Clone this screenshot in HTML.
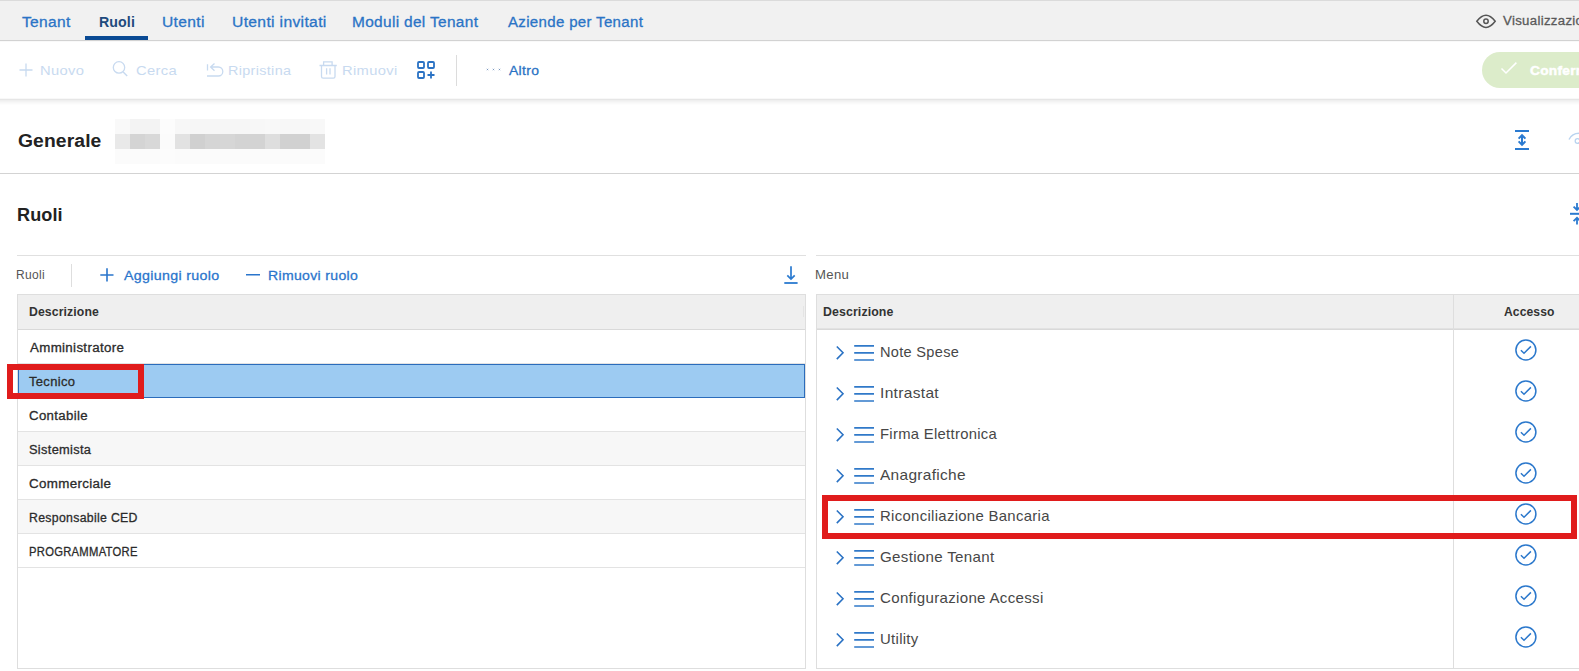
<!DOCTYPE html>
<html><head><meta charset="utf-8">
<style>
*{margin:0;padding:0;box-sizing:border-box}
html,body{width:1579px;height:671px;overflow:hidden;background:#fff;font-family:"Liberation Sans",sans-serif}
.a{position:absolute;white-space:nowrap}
.red{position:absolute;border:6px solid #e01c1c}
</style></head><body>
<div class="a" style="left:0;top:0;width:1579px;height:41px;background:#f1f1f1;border-top:1px solid #dbdbdb;border-bottom:1px solid #d2d2d2"></div>
<div id="t_tenant" class="a" style="left:22px;top:14px;font-size:14px;line-height:16px;color:#2a74c6;-webkit-text-stroke:0.28px #2a74c6;letter-spacing:0.300px;transform-origin:0 0;transform:scaleX(1.1093);margin-left:0.48px;">Tenant</div>
<div id="t_ruoli" class="a" style="left:99px;top:14px;font-size:14px;line-height:16px;color:#1d4a7d;font-weight:bold;letter-spacing:0.100px;transform-origin:0 0;transform:scaleX(1.0118);margin-left:-0.16px;">Ruoli</div>
<div id="t_utenti" class="a" style="left:162px;top:14px;font-size:14px;line-height:16px;color:#2a74c6;-webkit-text-stroke:0.28px #2a74c6;letter-spacing:0.300px;transform-origin:0 0;transform:scaleX(1.1138);margin-left:-0.48px;">Utenti</div>
<div id="t_inv" class="a" style="left:232px;top:14px;font-size:14px;line-height:16px;color:#2a74c6;-webkit-text-stroke:0.28px #2a74c6;letter-spacing:0.300px;transform-origin:0 0;transform:scaleX(1.1181);margin-left:-0.48px;">Utenti invitati</div>
<div id="t_mod" class="a" style="left:353px;top:14px;font-size:14px;line-height:16px;color:#2a74c6;-webkit-text-stroke:0.28px #2a74c6;letter-spacing:0.300px;transform-origin:0 0;transform:scaleX(1.1018);margin-left:-0.96px;">Moduli del Tenant</div>
<div id="t_az" class="a" style="left:507px;top:14px;font-size:14px;line-height:16px;color:#2a74c6;-webkit-text-stroke:0.28px #2a74c6;letter-spacing:0.300px;transform-origin:0 0;transform:scaleX(1.0746);margin-left:0.64px;">Aziende per Tenant</div>
<div class="a" style="left:85px;top:36px;width:63px;height:4px;background:#0a4a94"></div>
<div id="visual" class="a" style="left:1503px;top:14px;font-size:12.5px;line-height:15px;color:#595959;-webkit-text-stroke:0.28px #595959;letter-spacing:0.300px;transform-origin:0 0;transform:scaleX(1.0570);margin-left:0.00px;">Visualizzazione</div>
<div class="a" style="left:0;top:41px;width:1579px;height:1px;background:#f9f9f9"></div>
<div class="a" style="left:0;top:98px;width:1579px;height:1px;background:#f8f8f8"></div>
<div class="a" style="left:0;top:99px;width:1579px;height:1px;background:#e6e6e6"></div>
<div class="a" style="left:0;top:100px;width:1579px;height:1px;background:#efefef"></div>
<div class="a" style="left:0;top:101px;width:1579px;height:1px;background:#f3f3f3"></div>
<div class="a" style="left:0;top:102px;width:1579px;height:1px;background:#f7f7f7"></div>
<div class="a" style="left:0;top:103px;width:1579px;height:1px;background:#fafafa"></div>
<div class="a" style="left:0;top:104px;width:1579px;height:1px;background:#fdfdfd"></div>
<div id="nuovo" class="a" style="left:42px;top:63px;font-size:13px;line-height:16px;color:#c8daf0;letter-spacing:0.300px;transform-origin:0 0;transform:scaleX(1.1336);margin-left:-1.76px;">Nuovo</div>
<div id="cerca" class="a" style="left:137px;top:63px;font-size:13px;line-height:16px;color:#c8daf0;letter-spacing:0.300px;transform-origin:0 0;transform:scaleX(1.1353);margin-left:-0.96px;">Cerca</div>
<div id="ripr" class="a" style="left:230px;top:63px;font-size:13px;line-height:16px;color:#c8daf0;letter-spacing:0.300px;transform-origin:0 0;transform:scaleX(1.1076);margin-left:-1.76px;">Ripristina</div>
<div id="rimuovi" class="a" style="left:344px;top:63px;font-size:13px;line-height:16px;color:#c8daf0;letter-spacing:0.300px;transform-origin:0 0;transform:scaleX(1.1316);margin-left:-1.76px;">Rimuovi</div>
<div class="a" style="left:456px;top:55px;width:1px;height:31px;background:#dcdcdc"></div>
<div id="altro" class="a" style="left:509px;top:63px;font-size:13px;line-height:16px;color:#2a72c4;-webkit-text-stroke:0.28px #2a72c4;letter-spacing:0.300px;transform-origin:0 0;transform:scaleX(1.0714);margin-left:0.00px;">Altro</div>
<div class="a" style="left:1482px;top:52px;width:120px;height:36px;border-radius:18px;background:#dcecca"></div>
<div id="conf" class="a" style="left:1530px;top:63px;font-size:13px;line-height:16px;color:#fff;font-weight:bold;letter-spacing:0.300px;transform-origin:0 0;transform:scaleX(1.0500);margin-left:0.00px;-webkit-text-stroke:0.5px #fff;">Conferma</div>
<div id="generale" class="a" style="left:17px;top:131px;font-size:18px;line-height:20px;color:#222;font-weight:bold;letter-spacing:0.100px;transform-origin:0 0;transform:scaleX(1.0719);margin-left:0.64px;">Generale</div>
<div class="a" style="left:115px;top:119px;width:210px;height:45px;display:grid;grid-template-columns:repeat(14,15px);grid-template-rows:repeat(3,15px)"><i style="background:#f9f9f9"></i><i style="background:#f3f3f3"></i><i style="background:#f3f3f3"></i><i style="background:#fcfcfc"></i><i style="background:#f7f7f7"></i><i style="background:#f6f6f6"></i><i style="background:#f6f6f6"></i><i style="background:#f6f6f6"></i><i style="background:#f6f6f6"></i><i style="background:#f7f7f7"></i><i style="background:#f8f8f8"></i><i style="background:#f7f7f7"></i><i style="background:#f7f7f7"></i><i style="background:#f8f8f8"></i><i style="background:#e9e9e9"></i><i style="background:#d4d4d4"></i><i style="background:#d8d8d8"></i><i style="background:#fbfbfb"></i><i style="background:#e2e2e2"></i><i style="background:#d0d0d0"></i><i style="background:#d5d5d5"></i><i style="background:#d6d6d6"></i><i style="background:#d3d3d3"></i><i style="background:#d3d3d3"></i><i style="background:#dedede"></i><i style="background:#d1d1d1"></i><i style="background:#d1d1d1"></i><i style="background:#e3e3e3"></i><i style="background:#fbfbfb"></i><i style="background:#fbfbfb"></i><i style="background:#fbfbfb"></i><i style="background:#fcfcfc"></i><i style="background:#fbfbfb"></i><i style="background:#fbfbfb"></i><i style="background:#fbfbfb"></i><i style="background:#fbfbfb"></i><i style="background:#fbfbfb"></i><i style="background:#fbfbfb"></i><i style="background:#fbfbfb"></i><i style="background:#fbfbfb"></i><i style="background:#fbfbfb"></i><i style="background:#fbfbfb"></i></div>
<div class="a" style="left:0;top:173px;width:1579px;height:1px;background:#d3d3d3"></div>
<div id="ruolititle" class="a" style="left:17px;top:205px;font-size:18px;line-height:20px;color:#222;font-weight:bold;letter-spacing:0.100px;transform-origin:0 0;transform:scaleX(1.0048);margin-left:-0.48px;">Ruoli</div>
<div class="a" style="left:17px;top:255px;width:789px;height:1px;background:#e0e0e0"></div>
<div class="a" style="left:816px;top:255px;width:763px;height:1px;background:#e0e0e0"></div>
<div id="ruolismall" class="a" style="left:17px;top:268px;font-size:12px;line-height:14px;color:#555;letter-spacing:0.300px;transform-origin:0 0;transform:scaleX(1.0007);margin-left:-0.80px;">Ruoli</div>
<div class="a" style="left:71px;top:264px;width:1px;height:23px;background:#dedede"></div>
<div id="aggiungi" class="a" style="left:123px;top:268px;font-size:13.5px;line-height:16px;color:#2a75cc;-webkit-text-stroke:0.28px #2a75cc;letter-spacing:0.300px;transform-origin:0 0;transform:scaleX(1.0556);margin-left:0.96px;">Aggiungi ruolo</div>
<div id="rimruolo" class="a" style="left:269px;top:268px;font-size:13.5px;line-height:16px;color:#2a75cc;-webkit-text-stroke:0.28px #2a75cc;letter-spacing:0.300px;transform-origin:0 0;transform:scaleX(1.0424);margin-left:-0.64px;">Rimuovi ruolo</div>
<div id="menu" class="a" style="left:816px;top:268px;font-size:12px;line-height:14px;color:#555;letter-spacing:0.300px;transform-origin:0 0;transform:scaleX(1.0936);margin-left:-0.80px;">Menu</div>
<div class="a" style="left:17px;top:294px;width:789px;height:375px;border:1px solid #dedede"></div>
<div class="a" style="left:18px;top:295px;width:787px;height:35px;background:#efefef;border-bottom:1px solid #d9d9d9"></div>
<div class="a" style="left:803px;top:306px;width:1px;height:11px;background:#e4e4e4"></div>
<div id="descL" class="a" style="left:29px;top:305px;font-size:12px;line-height:14px;color:#333;font-weight:bold;letter-spacing:0.100px;transform-origin:0 0;transform:scaleX(1.0207);margin-left:0.48px;">Descrizione</div>
<div class="a" style="left:18px;top:330px;width:787px;height:34px;background:#fff;border-bottom:1px solid #e3e3e3"></div>
<div id="row0" class="a" style="left:29px;top:340.5px;font-size:12px;line-height:14px;color:#2b2b2b;-webkit-text-stroke:0.28px #2b2b2b;letter-spacing:0.300px;transform-origin:0 0;transform:scaleX(1.1094);margin-left:1.28px;">Amministratore</div>
<div class="a" style="left:18px;top:364px;width:787px;height:34px;background:#9dcbf2;border:1px solid #2b6cbb"></div>
<div id="row1" class="a" style="left:29px;top:374.5px;font-size:12px;line-height:14px;color:#2b2b2b;-webkit-text-stroke:0.28px #2b2b2b;letter-spacing:0.300px;transform-origin:0 0;transform:scaleX(1.0813);margin-left:0.32px;">Tecnico</div>
<div class="a" style="left:18px;top:398px;width:787px;height:34px;background:#fff;border-bottom:1px solid #e3e3e3"></div>
<div id="row2" class="a" style="left:29px;top:408.5px;font-size:12px;line-height:14px;color:#2b2b2b;-webkit-text-stroke:0.28px #2b2b2b;letter-spacing:0.300px;transform-origin:0 0;transform:scaleX(1.1020);margin-left:0.48px;">Contabile</div>
<div class="a" style="left:18px;top:432px;width:787px;height:34px;background:#f7f7f7;border-bottom:1px solid #e3e3e3"></div>
<div id="row3" class="a" style="left:29px;top:442.5px;font-size:12px;line-height:14px;color:#2b2b2b;-webkit-text-stroke:0.28px #2b2b2b;letter-spacing:0.300px;transform-origin:0 0;transform:scaleX(1.0678);margin-left:0.48px;">Sistemista</div>
<div class="a" style="left:18px;top:466px;width:787px;height:34px;background:#fff;border-bottom:1px solid #e3e3e3"></div>
<div id="row4" class="a" style="left:29px;top:476.5px;font-size:12px;line-height:14px;color:#2b2b2b;-webkit-text-stroke:0.28px #2b2b2b;letter-spacing:0.300px;transform-origin:0 0;transform:scaleX(1.1136);margin-left:0.48px;">Commerciale</div>
<div class="a" style="left:18px;top:500px;width:787px;height:34px;background:#f7f7f7;border-bottom:1px solid #e3e3e3"></div>
<div id="row5" class="a" style="left:29px;top:510.5px;font-size:12px;line-height:14px;color:#2b2b2b;-webkit-text-stroke:0.28px #2b2b2b;letter-spacing:0.300px;transform-origin:0 0;transform:scaleX(1.0246);margin-left:0.48px;">Responsabile CED</div>
<div class="a" style="left:18px;top:534px;width:787px;height:34px;background:#fff;border-bottom:1px solid #e3e3e3"></div>
<div id="row6" class="a" style="left:29px;top:544.5px;font-size:12px;line-height:14px;color:#2b2b2b;-webkit-text-stroke:0.28px #2b2b2b;letter-spacing:0.300px;transform-origin:0 0;transform:scaleX(0.9362);margin-left:0.48px;">PROGRAMMATORE</div>
<div class="a" style="left:816px;top:294px;width:770px;height:375px;border:1px solid #dedede"></div>
<div class="a" style="left:817px;top:295px;width:770px;height:35px;background:#efefef;border-bottom:1px solid #d9d9d9"></div>
<div class="a" style="left:817px;top:328px;width:762px;height:1px;background:#e2e2e2"></div>
<div class="a" style="left:1453px;top:295px;width:1px;height:373px;background:#dedede"></div>
<div id="descR" class="a" style="left:824px;top:305px;font-size:12px;line-height:14px;color:#333;font-weight:bold;letter-spacing:0.100px;transform-origin:0 0;transform:scaleX(1.0294);margin-left:-0.80px;">Descrizione</div>
<div id="accesso" class="a" style="left:1504px;top:305px;font-size:12px;line-height:14px;color:#333;font-weight:bold;letter-spacing:0.100px;transform-origin:0 0;transform:scaleX(1.0080);margin-left:-0.48px;">Accesso</div>
<div id="m0" class="a" style="left:881px;top:344px;font-size:14.5px;line-height:17px;color:#474747;letter-spacing:0.300px;transform-origin:0 0;transform:scaleX(1.0053);margin-left:-1.12px;">Note Spese</div>
<div id="m1" class="a" style="left:881px;top:385px;font-size:14.5px;line-height:17px;color:#474747;letter-spacing:0.300px;transform-origin:0 0;transform:scaleX(1.0705);margin-left:-1.44px;">Intrastat</div>
<div id="m2" class="a" style="left:881px;top:426px;font-size:14.5px;line-height:17px;color:#474747;letter-spacing:0.300px;transform-origin:0 0;transform:scaleX(1.0211);margin-left:-1.44px;">Firma Elettronica</div>
<div id="m3" class="a" style="left:881px;top:467px;font-size:14.5px;line-height:17px;color:#474747;letter-spacing:0.300px;transform-origin:0 0;transform:scaleX(1.0650);margin-left:-0.64px;">Anagrafiche</div>
<div id="m4" class="a" style="left:881px;top:508px;font-size:14.5px;line-height:17px;color:#474747;letter-spacing:0.300px;transform-origin:0 0;transform:scaleX(1.0281);margin-left:-1.44px;">Riconciliazione Bancaria</div>
<div id="m5" class="a" style="left:881px;top:549px;font-size:14.5px;line-height:17px;color:#474747;letter-spacing:0.300px;transform-origin:0 0;transform:scaleX(1.0418);margin-left:-0.64px;">Gestione Tenant</div>
<div id="m6" class="a" style="left:881px;top:590px;font-size:14.5px;line-height:17px;color:#474747;letter-spacing:0.300px;transform-origin:0 0;transform:scaleX(1.0398);margin-left:-0.64px;">Configurazione Accessi</div>
<div id="m7" class="a" style="left:881px;top:631px;font-size:14.5px;line-height:17px;color:#474747;letter-spacing:0.300px;transform-origin:0 0;transform:scaleX(1.0274);margin-left:-1.44px;">Utility</div>
<svg class="a" style="left:0;top:0" width="1579" height="671" viewBox="0 0 1579 671"><path d="M1476.8 21.3C1480 17.2 1483 15.3 1486 15.3C1489 15.3 1492 17.2 1495.2 21.3C1492 25.5 1489 27.4 1486 27.4C1483 27.4 1480 25.5 1476.8 21.3Z" fill="none" stroke="#555" stroke-width="1.5"/><circle cx="1486" cy="21.3" r="2.2" fill="none" stroke="#555" stroke-width="1.5"/><path d="M26 63.5V76.5M19.5 70H32.5" stroke="#c8daf0" stroke-width="1.3" fill="none"/><circle cx="119" cy="67.4" r="5.7" stroke="#c8daf0" stroke-width="1.3" fill="none"/><path d="M123.2 71.9L127.2 76" stroke="#c8daf0" stroke-width="1.4"/><path d="M207.5 64.3V70.5M214.5 63.5L210.6 67L214.5 70.7M210.6 67H218.3A4.5 4.5 0 0 1 218.3 76H207" stroke="#c8daf0" stroke-width="1.3" fill="none"/><path d="M319.5 65.5H336.8M323.6 65.5V61.9H332.1V65.5M321.5 66.3V76.6Q321.5 78.2 323.1 78.2H333.4Q335 78.2 335 76.6V66.3M326.6 68.2V74.6M330 68.2V74.6" stroke="#c8daf0" stroke-width="1.3" fill="none"/><g transform="translate(417 61)"><rect x="1" y="1" width="6" height="6" rx="1" fill="none" stroke="#2a72c4" stroke-width="1.8"/><rect x="11" y="1" width="6" height="6" rx="1" fill="none" stroke="#2a72c4" stroke-width="1.8"/><rect x="1" y="11" width="6" height="6" rx="1" fill="none" stroke="#2a72c4" stroke-width="1.8"/><path d="M14 10.5V17.5M10.5 14H17.5" stroke="#2a72c4" stroke-width="1.8"/></g><path d="M486.8 68.8l1.4 1.4m0-1.4l-1.4 1.4M492.8 68.8l1.4 1.4m0-1.4l-1.4 1.4M498.8 68.8l1.4 1.4m0-1.4l-1.4 1.4" stroke="#6f8fbb" stroke-width="0.8"/><path d="M1501.5 68.5L1506 73L1516.4 62.6" stroke="#fff" stroke-width="1.5" fill="none"/><path d="M1515 131H1529M1515 149H1529" stroke="#2a7ad0" stroke-width="1.9"/><path d="M1518.6 138.6L1522 135.2L1525.4 138.6M1522 135.6V144.6M1518.6 141.4L1522 144.8L1525.4 141.4" stroke="#2a7ad0" stroke-width="2" fill="none"/><path d="M1569 139.5C1571 135.5 1575 133.3 1579 133.3" stroke="#b9d3ef" stroke-width="1.4" fill="none"/><circle cx="1577.5" cy="141" r="2.3" stroke="#b9d3ef" stroke-width="1.3" fill="none"/><path d="M1570 213.8H1581" stroke="#2a7ad0" stroke-width="2"/><path d="M1577 203V209.8M1573.6 206.6L1577 210L1580.4 206.6M1577 224.5V217.8M1573.6 221.2L1577 217.8L1580.4 221.2" stroke="#2a7ad0" stroke-width="1.8" fill="none"/><path d="M107 268.3V281.5M100.3 275H113.5M246 274.8H260" stroke="#2a75cc" stroke-width="1.6" fill="none"/><path d="M791 266.3V279M787.3 275.3L791 279L794.7 275.3" stroke="#2a7ad0" stroke-width="1.7" fill="none"/><path d="M784.3 283H797.6" stroke="#2a7ad0" stroke-width="1.8"/><path d="M836.8 346.5L843 352.8L836.8 359.1" stroke="#2a72c4" stroke-width="1.6" fill="none"/><path d="M854.2 345.8H874M854.2 352.8H874M854.2 360.0H874" stroke="#3079c9" stroke-width="1.7"/><circle cx="1525.9" cy="350.0" r="10" stroke="#2b78cc" stroke-width="1.5" fill="none"/><path d="M1520.9 350.3L1524 353.2L1530.9 346.4" stroke="#2b78cc" stroke-width="1.5" fill="none"/><path d="M836.8 387.5L843 393.8L836.8 400.1" stroke="#2a72c4" stroke-width="1.6" fill="none"/><path d="M854.2 386.8H874M854.2 393.8H874M854.2 401.0H874" stroke="#3079c9" stroke-width="1.7"/><circle cx="1525.9" cy="391.0" r="10" stroke="#2b78cc" stroke-width="1.5" fill="none"/><path d="M1520.9 391.3L1524 394.2L1530.9 387.4" stroke="#2b78cc" stroke-width="1.5" fill="none"/><path d="M836.8 428.5L843 434.8L836.8 441.1" stroke="#2a72c4" stroke-width="1.6" fill="none"/><path d="M854.2 427.8H874M854.2 434.8H874M854.2 442.0H874" stroke="#3079c9" stroke-width="1.7"/><circle cx="1525.9" cy="432.0" r="10" stroke="#2b78cc" stroke-width="1.5" fill="none"/><path d="M1520.9 432.3L1524 435.2L1530.9 428.4" stroke="#2b78cc" stroke-width="1.5" fill="none"/><path d="M836.8 469.5L843 475.8L836.8 482.1" stroke="#2a72c4" stroke-width="1.6" fill="none"/><path d="M854.2 468.8H874M854.2 475.8H874M854.2 483.0H874" stroke="#3079c9" stroke-width="1.7"/><circle cx="1525.9" cy="473.0" r="10" stroke="#2b78cc" stroke-width="1.5" fill="none"/><path d="M1520.9 473.3L1524 476.2L1530.9 469.4" stroke="#2b78cc" stroke-width="1.5" fill="none"/><path d="M836.8 510.5L843 516.8L836.8 523.1" stroke="#2a72c4" stroke-width="1.6" fill="none"/><path d="M854.2 509.8H874M854.2 516.8H874M854.2 524.0H874" stroke="#3079c9" stroke-width="1.7"/><circle cx="1525.9" cy="514.0" r="10" stroke="#2b78cc" stroke-width="1.5" fill="none"/><path d="M1520.9 514.3L1524 517.2L1530.9 510.4" stroke="#2b78cc" stroke-width="1.5" fill="none"/><path d="M836.8 551.5L843 557.8L836.8 564.1" stroke="#2a72c4" stroke-width="1.6" fill="none"/><path d="M854.2 550.8H874M854.2 557.8H874M854.2 565.0H874" stroke="#3079c9" stroke-width="1.7"/><circle cx="1525.9" cy="555.0" r="10" stroke="#2b78cc" stroke-width="1.5" fill="none"/><path d="M1520.9 555.3L1524 558.2L1530.9 551.4" stroke="#2b78cc" stroke-width="1.5" fill="none"/><path d="M836.8 592.5L843 598.8L836.8 605.1" stroke="#2a72c4" stroke-width="1.6" fill="none"/><path d="M854.2 591.8H874M854.2 598.8H874M854.2 606.0H874" stroke="#3079c9" stroke-width="1.7"/><circle cx="1525.9" cy="596.0" r="10" stroke="#2b78cc" stroke-width="1.5" fill="none"/><path d="M1520.9 596.3L1524 599.2L1530.9 592.4" stroke="#2b78cc" stroke-width="1.5" fill="none"/><path d="M836.8 633.5L843 639.8L836.8 646.1" stroke="#2a72c4" stroke-width="1.6" fill="none"/><path d="M854.2 632.8H874M854.2 639.8H874M854.2 647.0H874" stroke="#3079c9" stroke-width="1.7"/><circle cx="1525.9" cy="637.0" r="10" stroke="#2b78cc" stroke-width="1.5" fill="none"/><path d="M1520.9 637.3L1524 640.2L1530.9 633.4" stroke="#2b78cc" stroke-width="1.5" fill="none"/></svg>
<div class="red" style="left:7px;top:364px;width:137px;height:35px"></div>
<div class="red" style="left:822px;top:495px;width:755px;height:44px"></div>
</body></html>
